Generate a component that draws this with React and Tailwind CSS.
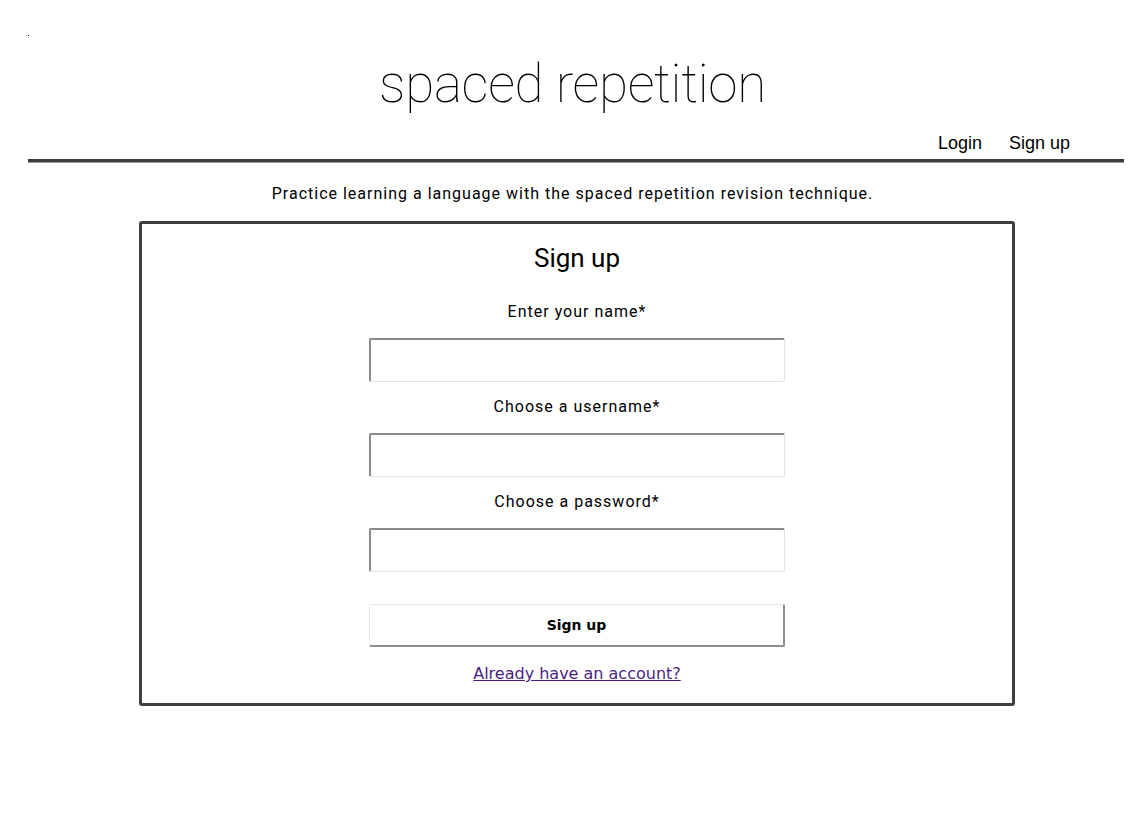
import { useState } from "react";

// ── Field ─────────────────────────────────────────────────────────────────────
const Field = ({ label, type = "text", value, onChange }) => (
  <div className="flex flex-col items-center">
    <label className="text-[16px] leading-[20px] tracking-[1px] text-black mb-[16px]">{label}</label>
    <input
      type={type}
      value={value}
      onChange={onChange}
      className="w-[416px] h-[44px] bg-white outline-none px-2 border-t-2 border-l-2 border-r border-b border-t-[#8a8a8a] border-l-[#8a8a8a] border-r-[#e2e2e2] border-b-[#e2e2e2] rounded-[2px]"
    />
  </div>
);

const App = () => {
  const [form, setForm] = useState({ name: "", username: "", password: "" });
  const set = (k) => (e) => setForm({ ...form, [k]: e.target.value });

  return (
    <div className="min-h-screen bg-white text-black">
      <div className="font-['Roboto',sans-serif]">
        {/* tiny mark top-left */}
        <div className="h-[36px] pl-[28px] flex items-end">
          <span className="block w-px h-px bg-black" />
        </div>

        {/* ── Title ── */}
        <h1 className="text-center text-[53px] leading-[60px] font-thin tracking-[-0.3px] text-black mt-[18px]">
          spaced repetition
        </h1>

        {/* ── Nav ── */}
        <nav className="flex justify-end gap-[27px] pr-[75px] mt-[18px] font-['Liberation_Sans',Arial,sans-serif] text-[18px] leading-[22px]">
          <a className="text-black">Login</a>
          <a className="text-black">Sign up</a>
        </nav>

        <div className="ml-[28px] mr-[21px] mt-[5px] border-t-[3px] border-[#3c3c3c] border-b border-b-[#9a9a9a]" />

        {/* ── Tagline ── */}
        <p className="text-center text-[16px] leading-[20px] tracking-[1px] mt-[21px]">
          Practice learning a language with the spaced repetition revision technique.
        </p>

        {/* ── Card ── */}
        <div className="mt-[17px] w-[876px] ml-[139px] border-[3px] border-[#3f3f3f] rounded-[3px] pt-[18px] pb-[19px] flex flex-col items-center">
          <h2 className="text-[26px] leading-[32px] font-normal mb-[28px]">Sign up</h2>

          <div className="flex flex-col gap-[15px]">
            <Field label="Enter your name*" value={form.name} onChange={set("name")} />
            <Field label="Choose a username*" value={form.username} onChange={set("username")} />
            <Field label="Choose a password*" type="password" value={form.password} onChange={set("password")} />
          </div>

          <button className="mt-[32px] w-[416px] h-[43px] bg-white font-['DejaVu_Sans',Verdana,sans-serif] font-bold text-[14px] text-black border-t border-l border-t-[#e6e6e6] border-l-[#e6e6e6] border-r-2 border-b-2 border-r-[#8e8e8e] border-b-[#8e8e8e] rounded-[2px]">
            Sign up
          </button>

          <a href="#" className="mt-[17px] font-['DejaVu_Sans',Verdana,sans-serif] text-[16px] leading-[20px] text-[#4b1f7f] underline">
            Already have an account?
          </a>
        </div>
      </div>
    </div>
  );
};

export default App;
